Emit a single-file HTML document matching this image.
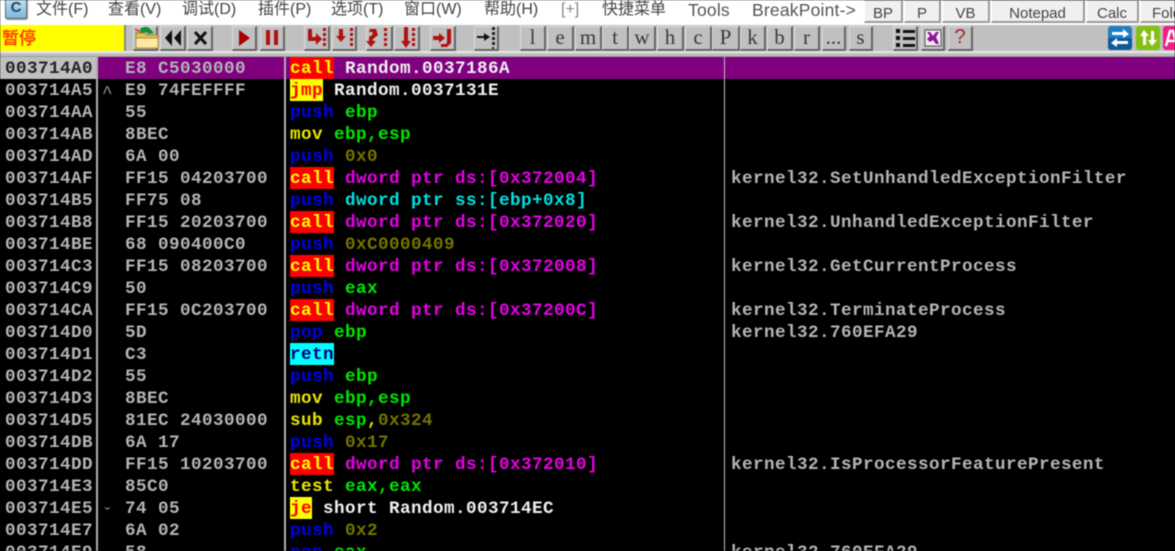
<!DOCTYPE html>
<html><head><meta charset="utf-8"><style>
html,body{margin:0;padding:0;background:#000}
#p{position:relative;width:1175px;height:551px;overflow:hidden;background:#000;filter:blur(.45px)}
#p div,#p svg{position:absolute}
.m{top:-1px;font:16px/22px "Liberation Sans","Noto Sans CJK SC",sans-serif;color:#444;white-space:nowrap}
.l{font-size:17.5px;color:#555;letter-spacing:.2px}
.t{top:0;height:23px;background:#f0f0f0;border:1px solid #bbb;border-left-color:#fff;border-right:2px solid #999;border-bottom:2px solid #999;box-sizing:border-box;text-align:center;font:15px/25px "Liberation Sans",sans-serif;color:#444}
.b{top:26px;height:25px;background:#c0c0c0;box-sizing:border-box;border:1px solid #ddd;border-right:2px solid #666;border-bottom:2px solid #666;text-align:center;font:21px/21px "Liberation Serif",serif;color:#3a3a3a}
.r{left:0;width:1175px;height:22px;font:bold 17.6px/24px "Liberation Mono",monospace;letter-spacing:.44px;white-space:pre;color:#b4b4b4}
.x{left:5px}.h{left:125px}.c{left:290px;color:#f0f0f0}.k{left:731px}
.u{left:102px;font-weight:normal;color:#999}
.cl,.jm,.re{display:inline-block;height:22px;line-height:24px}
.cl{background:#f00;color:#ff0}.jm{background:#ff0;color:#f00}.re{background:#0ff;color:#000080}
.bl{color:#0000e6}.g{color:#00e600}.o{color:#747400}.mg{color:#e600e6}.cy{color:#00e0e0}.y{color:#e6e600}
</style></head><body><div id="p">
<div style="left:0;top:0;width:1175px;height:25px;background:#fff"></div>
<div style="left:5px;top:-5px;width:20px;height:22px;background:linear-gradient(#d0e8f6,#78b8e0);border:1px solid #666;border-radius:2px;color:#245;font:bold 15px/24px 'Liberation Sans',sans-serif;text-align:center;box-shadow:1px 1px 1px #999">C</div>
<div class="m" style="left:36px">文件(F)</div><div class="m" style="left:108px">查看(V)</div><div class="m" style="left:182px">调试(D)</div><div class="m" style="left:258px">插件(P)</div><div class="m" style="left:331px">选项(T)</div><div class="m" style="left:404px">窗口(W)</div><div class="m" style="left:484px">帮助(H)</div><div class="m" style="left:561px;color:#888">[+]</div><div class="m" style="left:602px">快捷菜单</div><div class="m l" style="left:688px">Tools</div><div class="m l" style="left:752px">BreakPoint-&gt;</div>
<div class="t" style="left:864px;width:39px">BP</div><div class="t" style="left:904px;width:37px">P</div><div class="t" style="left:942px;width:48px">VB</div><div class="t" style="left:991px;width:94px">Notepad</div><div class="t" style="left:1086px;width:53px">Calc</div><div class="t" style="left:1140px;width:40px;text-align:left;padding-left:11px">Fold</div>

<div style="left:0;top:25px;width:1175px;height:32px;background:#c0c0c0"></div>
<div style="left:0;top:25px;width:124px;height:26px;background:#ff0;color:#f40;font:bold 17px/24px 'Noto Sans CJK SC',sans-serif;padding-left:2px;box-sizing:border-box">暂停</div>
<div style="left:124px;top:25px;width:2px;height:27px;background:#888"></div>
<div style="left:0;top:51px;width:1175px;height:2px;background:#e8e8e8"></div>
<div style="left:0;top:56px;width:1175px;height:1px;background:#999"></div>

<div class="b" style="left:133px;width:25px"></div><div class="b" style="left:160px;width:26px"></div><div class="b" style="left:187px;width:26px"></div>
<div class="b" style="left:232px;width:25px"></div><div class="b" style="left:260px;width:25px"></div>
<div class="b" style="left:304px;width:26px"></div><div class="b" style="left:332px;width:25px"></div><div class="b" style="left:366px;width:27px"></div><div class="b" style="left:394px;width:26px"></div><div class="b" style="left:430px;width:26px"></div><div class="b" style="left:474px;width:25px"></div>
<div class="b" style="left:520px;width:26px">l</div><div class="b" style="left:547px;width:27px">e</div><div class="b" style="left:575px;width:27px">m</div><div class="b" style="left:602px;width:27px">t</div><div class="b" style="left:629px;width:27px">w</div><div class="b" style="left:657px;width:27px">h</div><div class="b" style="left:685px;width:27px">c</div><div class="b" style="left:712px;width:28px">P</div><div class="b" style="left:740px;width:26px">k</div><div class="b" style="left:767px;width:26px">b</div><div class="b" style="left:794px;width:26px">r</div><div class="b" style="left:822px;width:24px">...</div><div class="b" style="left:849px;width:24px">s</div>
<div class="b" style="left:893px;width:25px"></div><div class="b" style="left:921px;width:24px"></div><div class="b" style="left:948px;width:25px;color:#b02020;font-family:'Liberation Sans',sans-serif;font-size:20px">?</div>

<svg style="left:0;top:0" width="1175" height="57" viewBox="0 0 1175 57">
<path d="M136 33h9l2 2h11v12h-22z" fill="#e6c050" stroke="#a08030"/><path d="M136 38h22v10h-22z" fill="#ffe9a0" stroke="#b09040"/><path d="M140 29c4-3 8-3 10 0l4 4-5 1-3-2-5 1z" fill="#109030"/><path d="M135 29l5 3" stroke="#e03030" stroke-width="1.5"/>
<path d="M172 30l-7 8 7 8zM181 30l-7 8 7 8z" fill="#111"/><path d="M195 32l11 12M206 32l-11 12" stroke="#111" stroke-width="3"/>
<path d="M239 30l11 8-11 8z" fill="#a80000"/><path d="M266 30h4v15h-4zM274 30h4v15h-4z" fill="#b01010"/>
<g fill="#b01010"><path d="M308 29h4v8h4v-4l6 6-6 6v-4h-8z"/><path d="M323 28h3v3h-3zM323 33h3v3h-3zM323 38h3v3h-3zM323 43h3v3h-3z"/>
<path d="M339 29h4v7h3l-5 6-5-6h3z"/><path d="M350 28h3v3h-3zM350 33h3v3h-3zM350 38h3v3h-3zM350 43h3v3h-3z"/>
<path d="M370 29h6l2 6-5 4v2h3l-5 6-5-6h3v-4l4-3-1-2h-3z"/><path d="M384 28h3v3h-3zM384 33h3v3h-3zM384 38h3v3h-3zM384 43h3v3h-3z"/>
<path d="M404 27h4v14h3l-5 7-5-7h3z"/><path d="M412 28h3v3h-3zM412 33h3v3h-3zM412 38h3v3h-3zM412 43h3v3h-3z"/>
<path d="M433 36h6v-3l6 5-6 5v-3h-6z"/><path d="M447 29h4v14l-4 4h-6v-3h5l1-2z"/></g>
<path d="M477 36h7v-3l6 4-6 4v-3h-7z" fill="#111"/><path d="M492 27h3v3h-3zM492 32h3v3h-3zM492 37h3v3h-3zM492 42h3v3h-3zM492 47h2v2h-2z" fill="#222"/>
<path d="M896 29h4v4h-4zM896 36h4v4h-4zM896 43h4v4h-4zM903 30h12v3h-12zM903 37h12v3h-12zM903 44h12v3h-12z" fill="#111"/>
<rect x="925" y="30" width="16" height="16" fill="#eee" stroke="#555"/><path d="M927 32l3 0 3 4 3-4 3 0-3 5 3 7-3 0-3-4-3 2-3-3 3-3z" fill="#90109a"/>
<rect x="1108" y="26" width="24" height="24" rx="3" fill="#1c7fc4"/><path d="M1108 38h24v9a3 3 0 0 1-3 3h-18a3 3 0 0 1-3-3z" fill="#105a98"/><path d="M1112 32h11v-3l6 5-6 4v-3h-11zM1128 41h-11v-3l-6 5 6 4v-3h11z" fill="#fff"/>
<rect x="1136" y="26" width="24" height="24" rx="3" fill="#84bf14"/><path d="M1144 30l-4 6h3v9h3v-9h3zM1152 46l-4-6h3v-9h3v9h3z" fill="#fff"/>
<rect x="1163" y="26" width="16" height="24" rx="3" fill="#f01e80"/><path d="M1166 46l4-15h3l4 15M1168 41h7" fill="none" stroke="#fff" stroke-width="2.5"/>
</svg>

<div style="left:0;top:57px;width:1175px;height:22px;background:#800080"></div>
<div style="left:0;top:57px;width:96px;height:22px;background:#c0c0c0"></div>
<div style="left:96px;top:57px;width:2px;height:494px;background:#b0b0b0"></div>
<div style="left:284px;top:57px;width:2px;height:494px;background:#b0b0b0"></div>
<div style="left:724px;top:57px;width:1px;height:494px;background:#c0c0c0"></div>

<div class="r" style="top:57px"><div class="x" style="color:#222">003714A0</div><div class="h">E8 C5030000</div><div class="c"><span class="cl">call</span> Random.0037186A</div></div>
<div class="r" style="top:79px"><div class="x">003714A5</div><div class="u" style="top:3px">^</div><div class="h">E9 74FEFFFF</div><div class="c"><span class="jm">jmp</span> Random.0037131E</div></div>
<div class="r" style="top:101px"><div class="x">003714AA</div><div class="h">55</div><div class="c"><span class="bl">push</span> <span class="g">ebp</span></div></div>
<div class="r" style="top:123px"><div class="x">003714AB</div><div class="h">8BEC</div><div class="c"><span class="y">mov</span> <span class="g">ebp,esp</span></div></div>
<div class="r" style="top:145px"><div class="x">003714AD</div><div class="h">6A 00</div><div class="c"><span class="bl">push</span> <span class="o">0x0</span></div></div>
<div class="r" style="top:167px"><div class="x">003714AF</div><div class="h">FF15 04203700</div><div class="c"><span class="cl">call</span> <span class="mg">dword ptr ds:[0x372004]</span></div><div class="k">kernel32.SetUnhandledExceptionFilter</div></div>
<div class="r" style="top:189px"><div class="x">003714B5</div><div class="h">FF75 08</div><div class="c"><span class="bl">push</span> <span class="cy">dword ptr ss:[ebp+0x8]</span></div></div>
<div class="r" style="top:211px"><div class="x">003714B8</div><div class="h">FF15 20203700</div><div class="c"><span class="cl">call</span> <span class="mg">dword ptr ds:[0x372020]</span></div><div class="k">kernel32.UnhandledExceptionFilter</div></div>
<div class="r" style="top:233px"><div class="x">003714BE</div><div class="h">68 090400C0</div><div class="c"><span class="bl">push</span> <span class="o">0xC0000409</span></div></div>
<div class="r" style="top:255px"><div class="x">003714C3</div><div class="h">FF15 08203700</div><div class="c"><span class="cl">call</span> <span class="mg">dword ptr ds:[0x372008]</span></div><div class="k">kernel32.GetCurrentProcess</div></div>
<div class="r" style="top:277px"><div class="x">003714C9</div><div class="h">50</div><div class="c"><span class="bl">push</span> <span class="g">eax</span></div></div>
<div class="r" style="top:299px"><div class="x">003714CA</div><div class="h">FF15 0C203700</div><div class="c"><span class="cl">call</span> <span class="mg">dword ptr ds:[0x37200C]</span></div><div class="k">kernel32.TerminateProcess</div></div>
<div class="r" style="top:321px"><div class="x">003714D0</div><div class="h">5D</div><div class="c"><span class="bl">pop</span> <span class="g">ebp</span></div><div class="k">kernel32.760EFA29</div></div>
<div class="r" style="top:343px"><div class="x">003714D1</div><div class="h">C3</div><div class="c"><span class="re">retn</span></div></div>
<div class="r" style="top:365px"><div class="x">003714D2</div><div class="h">55</div><div class="c"><span class="bl">push</span> <span class="g">ebp</span></div></div>
<div class="r" style="top:387px"><div class="x">003714D3</div><div class="h">8BEC</div><div class="c"><span class="y">mov</span> <span class="g">ebp,esp</span></div></div>
<div class="r" style="top:409px"><div class="x">003714D5</div><div class="h">81EC 24030000</div><div class="c"><span class="y">sub</span> <span class="g">esp</span><span class="y">,</span><span class="o">0x324</span></div></div>
<div class="r" style="top:431px"><div class="x">003714DB</div><div class="h">6A 17</div><div class="c"><span class="bl">push</span> <span class="o">0x17</span></div></div>
<div class="r" style="top:453px"><div class="x">003714DD</div><div class="h">FF15 10203700</div><div class="c"><span class="cl">call</span> <span class="mg">dword ptr ds:[0x372010]</span></div><div class="k">kernel32.IsProcessorFeaturePresent</div></div>
<div class="r" style="top:475px"><div class="x">003714E3</div><div class="h">85C0</div><div class="c"><span class="y">test</span> <span class="g">eax,eax</span></div></div>
<div class="r" style="top:497px"><div class="x">003714E5</div><div class="u" style="top:7px">ˇ</div><div class="h">74 05</div><div class="c"><span class="jm">je</span> short Random.003714EC</div></div>
<div class="r" style="top:519px"><div class="x">003714E7</div><div class="h">6A 02</div><div class="c"><span class="bl">push</span> <span class="o">0x2</span></div></div>
<div class="r" style="top:541px"><div class="x">003714E9</div><div class="h">58</div><div class="c"><span class="bl">pop</span> <span class="g">eax</span></div><div class="k">kernel32.760EFA29</div></div>
</div></body></html>
